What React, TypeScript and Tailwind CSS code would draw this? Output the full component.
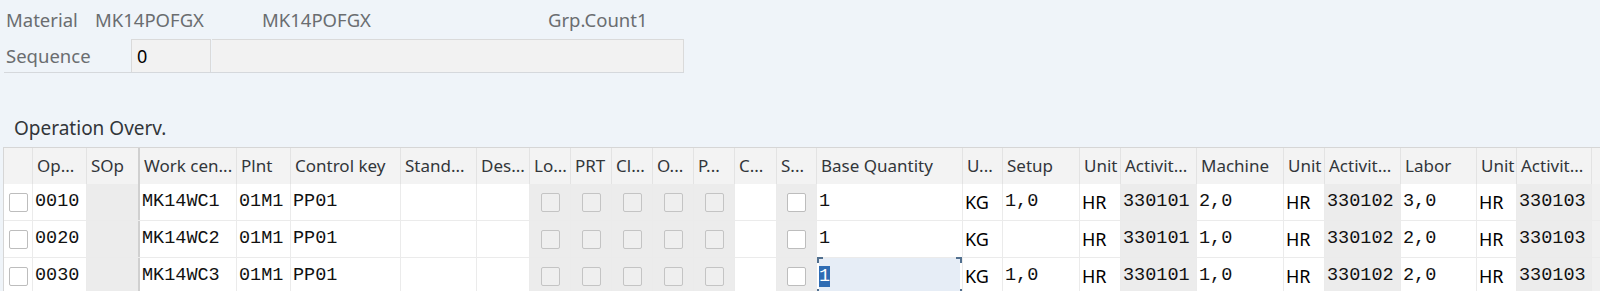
import type { ReactNode } from "react";

interface Row {
  op: string;
  wc: string;
  base: string;
  setup: string;
  mach: string;
  labor: string;
  focused?: boolean;
}

interface Col {
  w: string;
  label: string;
  bg: string;
  cell: (r: Row) => ReactNode;
}

const rows: Row[] = [
  { op: "0010", wc: "MK14WC1", base: "1", setup: "1,0", mach: "2,0", labor: "3,0" },
  { op: "0020", wc: "MK14WC2", base: "1", setup: "", mach: "1,0", labor: "2,0" },
  { op: "0030", wc: "MK14WC3", base: "1", setup: "1,0", mach: "1,0", labor: "2,0", focused: true },
];

const mono = "font-['Liberation_Mono',monospace] text-[18.5px] text-[#111]";
const sans = "font-['Noto_Sans',sans-serif] text-[18px] text-black";

function Check({ disabled }: { disabled?: boolean }) {
  return (
    <div
      className={`w-[19px] h-[19px] rounded-[2px] border ${
        disabled ? "bg-[#efefef] border-[#c4c4c4]" : "bg-white border-[#bdbdbd]"
      }`}
    />
  );
}

const Mono = ({ v }: { v: string }) => <span className={mono}>{v}</span>;
const Sans = ({ v }: { v: string }) => <span className={sans}>{v}</span>;
const Dis = () => (
  <div className="w-full flex justify-center">
    <Check disabled />
  </div>
);

const cols: Col[] = [
  { w: "w-[29px]", label: "", bg: "bg-white", cell: () => <div className="pl-[3px]"><Check /></div> },
  { w: "w-[54px]", label: "Op...", bg: "bg-white", cell: (r) => <Mono v={r.op} /> },
  { w: "w-[53px] border-r-2 border-r-[#d0d0d0]", label: "SOp", bg: "bg-[#ececec]", cell: () => null },
  { w: "w-[97px]", label: "Work cen...", bg: "bg-white", cell: (r) => <Mono v={r.wc} /> },
  { w: "w-[54px]", label: "Plnt", bg: "bg-white", cell: () => <Mono v="01M1" /> },
  { w: "w-[110px]", label: "Control key", bg: "bg-white", cell: () => <Mono v="PP01" /> },
  { w: "w-[76px]", label: "Stand...", bg: "bg-white", cell: () => null },
  { w: "w-[53px]", label: "Des...", bg: "bg-white", cell: () => null },
  { w: "w-[41px]", label: "Lo...", bg: "bg-[#ececec]", cell: () => <Dis /> },
  { w: "w-[41px]", label: "PRT", bg: "bg-[#ececec]", cell: () => <Dis /> },
  { w: "w-[41px]", label: "Cl...", bg: "bg-[#ececec]", cell: () => <Dis /> },
  { w: "w-[41px]", label: "O...", bg: "bg-[#ececec]", cell: () => <Dis /> },
  { w: "w-[41px]", label: "P...", bg: "bg-[#ececec]", cell: () => <Dis /> },
  { w: "w-[42px]", label: "C...", bg: "bg-white", cell: () => null },
  {
    w: "w-[40px]",
    label: "S...",
    bg: "bg-[#ececec]",
    cell: () => (
      <div className="w-full flex justify-center">
        <Check />
      </div>
    ),
  },
  { w: "w-[146px]", label: "Base Quantity", bg: "bg-white", cell: (r) => <Mono v={r.base} /> },
  { w: "w-[40px]", label: "U...", bg: "bg-white", cell: () => <Sans v="KG" /> },
  { w: "w-[77px]", label: "Setup", bg: "bg-white", cell: (r) => <Mono v={r.setup} /> },
  { w: "w-[41px]", label: "Unit", bg: "bg-white", cell: () => <Sans v="HR" /> },
  { w: "w-[76px]", label: "Activit...", bg: "bg-[#ececec]", cell: () => <Mono v="330101" /> },
  { w: "w-[87px]", label: "Machine", bg: "bg-white", cell: (r) => <Mono v={r.mach} /> },
  { w: "w-[41px]", label: "Unit", bg: "bg-white", cell: () => <Sans v="HR" /> },
  { w: "w-[76px]", label: "Activit...", bg: "bg-[#ececec]", cell: () => <Mono v="330102" /> },
  { w: "w-[76px]", label: "Labor", bg: "bg-white", cell: (r) => <Mono v={r.labor} /> },
  { w: "w-[40px]", label: "Unit", bg: "bg-white", cell: () => <Sans v="HR" /> },
  { w: "w-[75px]", label: "Activit...", bg: "bg-[#ececec]", cell: () => <Mono v="330103" /> },
  { w: "w-[40px]", label: "", bg: "bg-[#f0f0f0]", cell: () => null },
];

function FocusCell() {
  return (
    <div className="relative w-full h-full flex items-center bg-[#e6edf6]">
      <span className={`${mono} bg-[#2f6cb3] !text-white leading-[21px]`}>1</span>
      {/* corner marks of the focused cell */}
      <div className="absolute left-[-2px] top-[-1px] w-[6px] h-[6px] border-l-2 border-t-2 border-[#52708f]" />
      <div className="absolute right-[-2px] top-[-1px] w-[6px] h-[6px] border-r-2 border-t-2 border-[#52708f]" />
      <div className="absolute left-[-2px] bottom-[-1px] w-[6px] h-[6px] border-l-2 border-b-2 border-[#52708f]" />
      <div className="absolute right-[-2px] bottom-[-1px] w-[6px] h-[6px] border-r-2 border-b-2 border-[#52708f]" />
    </div>
  );
}

export default function App() {
  return (
    <div className="w-[1600px] h-[291px] overflow-hidden bg-[#eff4f9] font-['Noto_Sans',sans-serif]">
      {/* Header fields */}
      <div className="h-[39px] flex items-center text-[18.5px] text-[#6a6d70]">
        <span className="ml-[6px] w-[89px]">Material</span>
        <span className="w-[167px]">MK14POFGX</span>
        <span className="w-[286px]">MK14POFGX</span>
        <span>Grp.Count1</span>
      </div>
      <div className="ml-[4px] w-[680px] h-[34px] flex border-b border-[#d5d8dc]">
        <span className="w-[127px] pl-[2px] flex items-center text-[18.5px] text-[#6a6d70]">Sequence</span>
        <div className="w-[80px] h-full flex items-center pl-[5px] bg-[#f2f2f2] border border-b-0 border-[#dadada] text-[18px] text-black">
          0
        </div>
        <div className="flex-1 h-full bg-[#f2f2f2] border border-b-0 border-l-0 border-[#dadada] ml-[1px]" />
      </div>

      {/* Table title */}
      <div className="mt-[37px] h-[37px] flex items-center pl-[14px] text-[19px] text-[#32363a]">Operation Overv.</div>

      {/* Operation table */}
      <div className="ml-[3px] border-l border-t border-[#d6d6d6]">
        <div className="flex h-[36px] bg-[#f3f3f3]">
          {cols.map((c, i) => (
            <div
              key={i}
              className={`${c.w} shrink-0 h-full flex items-center px-[4px] border-r border-[#e3e3e3] text-[17px] text-[#32363a] whitespace-nowrap overflow-hidden`}
            >
              {c.label}
            </div>
          ))}
        </div>
        {rows.map((r, ri) => (
          <div key={ri} className="flex h-[37px] border-b border-[#ebebeb]">
            {cols.map((c, i) => (
              <div
                key={i}
                className={`${c.w} ${c.bg} shrink-0 h-full flex items-center px-[2px] border-r border-[#ebebeb] whitespace-nowrap`}
              >
                {r.focused && c.label === "Base Quantity" ? <FocusCell /> : c.cell(r)}
              </div>
            ))}
          </div>
        ))}
      </div>
    </div>
  );
}
